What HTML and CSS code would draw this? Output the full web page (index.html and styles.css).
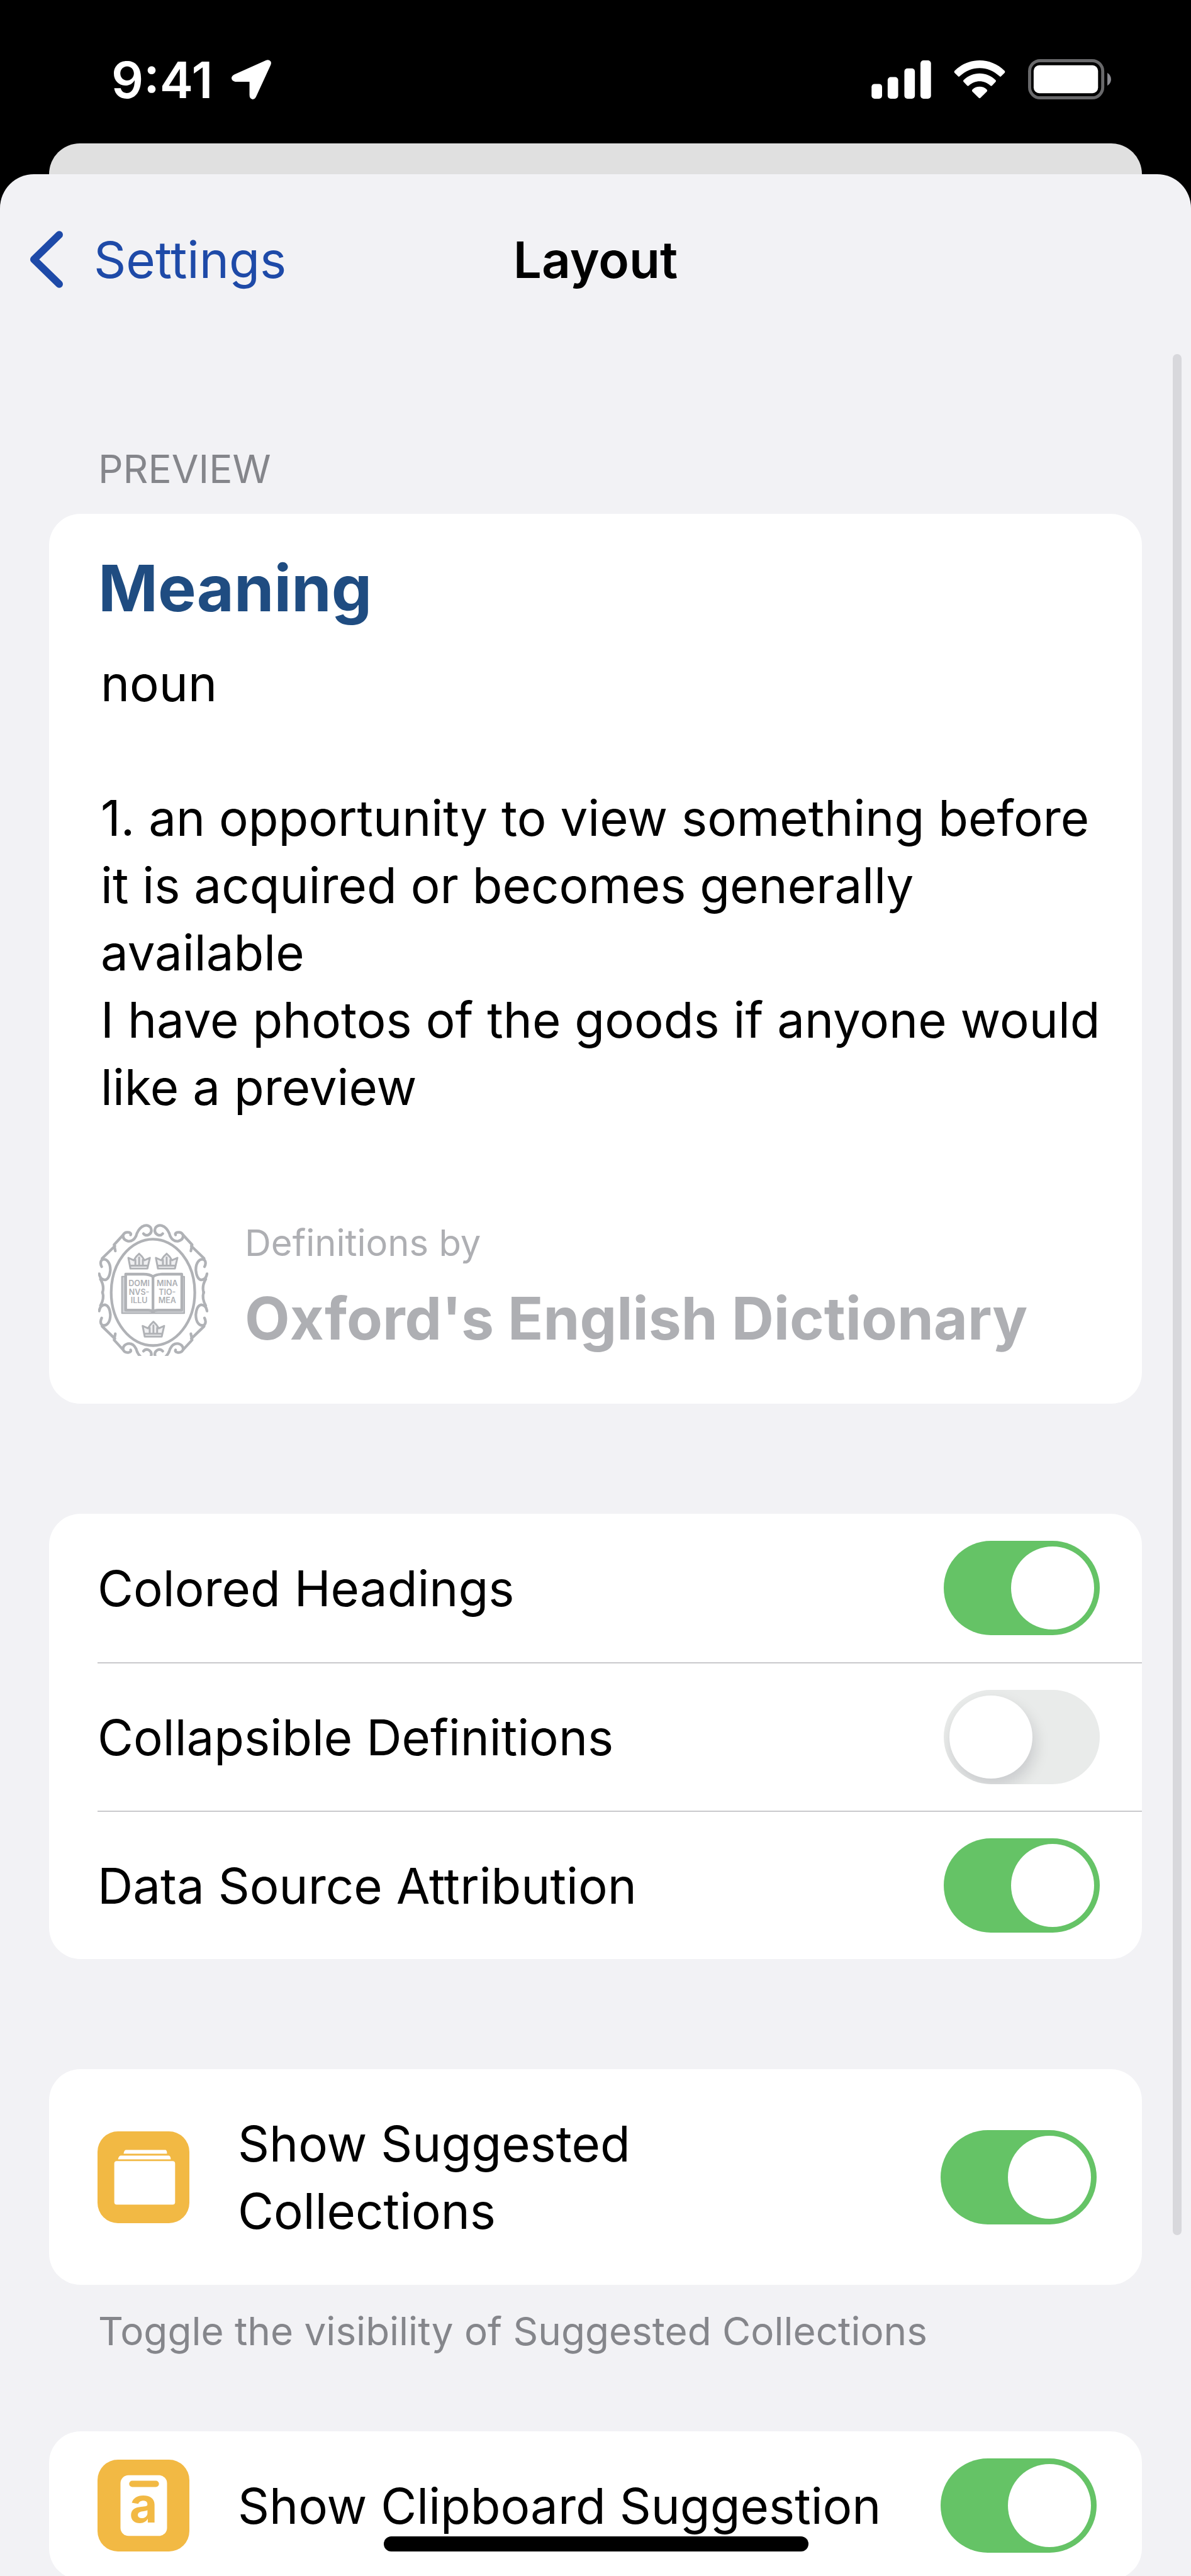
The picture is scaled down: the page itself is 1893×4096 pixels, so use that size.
FILE: index.html
```html
<!doctype html>
<html lang="en">
<head>
	<meta charset="UTF-8">
	<title>Layout</title>
	<link rel="stylesheet" href="styles.css">
</head>
<body>

<div class="screen">

	<!-- status bar -->
	<div class="status">
		<span class="time">9:41</span>
		<svg class="arrow" viewBox="0 0 64 64"><path d="M56 .700Q61-1 63.500 3Q64.500 6 63 9L40 59Q38 64 34 64Q29 63 29 57V35.500H6Q0 34 0 29.500Q0 26 5 23.500Z"/></svg>
		<div class="status-icons">
			<svg class="signal" viewBox="0 0 96 62">
				<rect x="0" y="38" width="17" height="24" rx="5"/>
				<rect x="26" y="27" width="17" height="35" rx="5"/>
				<rect x="53" y="13" width="17" height="49" rx="5"/>
				<rect x="79" y="0" width="17" height="62" rx="5"/>
			</svg>
			<svg class="wifi" viewBox="0 0 83 62">
				<path d="M1 17C24-5.500 59-5.500 82 17Q83 18.500 82 20L76 26Q75 27 73.500 25.500C55 8 28 8 9.500 25.500Q8 27 7 26L1 20Q0 18.500 1 17Z"/>
				<path d="M15.500 32C30 17.500 53 17.500 67.500 32Q68.500 33.500 67.500 34.500L61.500 41Q60.500 42 59 41C49 31.500 34 31.500 24 41Q22.500 42 21.500 41L15.500 34.500Q14.500 33.500 15.500 32Z"/>
				<path d="M30 47C36 41 47 41 53 47Q54.500 48.500 53.500 50L43 60.500Q41.500 62 40 60.500L29.500 50Q28.500 48.500 30 47Z"/>
			</svg>
			<svg class="battery" viewBox="0 0 134 65">
				<rect x="2.500" y="2.500" width="118" height="60" rx="17" fill="none" stroke="#69696b" stroke-width="5"/>
				<rect x="9" y="10" width="104" height="45" rx="9"/>
				<path d="M128 22Q134 26 134 32.500Q134 39 128 43Z" fill="#8a8a90"/>
			</svg>
		</div>
	</div>

	<div class="sheet-behind"></div>

	<div class="sheet">
		<div class="nav">
			<a class="back" href="#">
				<svg class="chevron" viewBox="0 0 56 94"><path d="M49 7L8 47L49 87" fill="none" stroke="#1e4aa8" stroke-width="12" stroke-linecap="round" stroke-linejoin="round"/></svg>
				Settings
			</a>
			<h1>Layout</h1>
		</div>

		<h2 class="section-title">PREVIEW</h2>
		<div class="card preview">
			<h3>Meaning</h3>
			<div class="definition">
				<p>noun</p>
				<p class="sense">1. an opportunity to view something before it is acquired or becomes generally available</p>
				<p>I have photos of the goods if anyone would like a preview</p>
			</div>
			<div class="source">
				<svg class="crest" viewBox="51 99 532 638">
					<defs>
						<g id="scroll">
							<path d="M270 146q10 12 24 6q22-12 10-36q-16-18-40-4q-22 16-30 46q-14 28-40 24q-26-8-22-30q8-16 28-12q12 4 8 12"/>
							<path d="M172 152L128 200L134 230M132 206L70 266"/>
							<path d="M68 306q-10-20 0-32q16-10 30 6q12 14 12 42q-4 44-26 48q-24-2-28-30"/>
							<path d="M62 366Q82 400 72 432"/>
						</g>
						<g id="crown">
							<path d="M14 76H96L108 24L82 36L70 18L56 4L42 18L30 36L4 24Z" fill="#efeff1"/>
							<path d="M38 58V34M56 58V22M74 58V34M16 62H94"/>
						</g>
					</defs>
					<g fill="none" stroke="#b0b2b6" stroke-width="13" stroke-linecap="round" stroke-linejoin="round">
						<use href="#scroll"/>
						<use href="#scroll" transform="matrix(-1 0 0 1 633 0)"/>
						<use href="#scroll" transform="matrix(1 0 0 -1 0 860)"/>
						<use href="#scroll" transform="matrix(-1 0 0 -1 633 860)"/>
						<ellipse cx="316" cy="430" rx="202" ry="257"/>
						<g stroke-width="9">
							<use href="#crown" x="193" y="239"/>
							<use href="#crown" x="326" y="239"/>
							<use href="#crown" x="262" y="568"/>
						</g>
						<path d="M166 354H182V516H300L316 526L332 516H455V354H467V531H166Z" fill="#d0d2d6" stroke-width="7"/>
						<path d="M184 342H270Q300 342 316 354Q332 342 362 342H455V516H340Q324 516 316 524Q308 516 292 516H184Z" fill="#fff"/>
						<path d="M316 354V520"/>
					</g>
					<g class="crest-text" text-anchor="middle">
						<text x="249" y="401">DOMI</text><text x="249" y="441">NVS-</text><text x="249" y="481">ILLU</text>
						<text x="385" y="401">MINA</text><text x="385" y="441">TIO-</text><text x="385" y="481">MEA</text>
					</g>
				</svg>
				<div>
					<p class="source-by">Definitions by</p>
					<p class="source-name">Oxford's English Dictionary</p>
				</div>
			</div>
		</div>

		<div class="card">
			<div class="row">
				<label for="headings">Colored Headings</label>
				<input class="switch" type="checkbox" id="headings" checked>
			</div>
			<div class="row">
				<label for="collapsible">Collapsible Definitions</label>
				<input class="switch" type="checkbox" id="collapsible">
			</div>
			<div class="row">
				<label for="attribution">Data Source Attribution</label>
				<input class="switch" type="checkbox" id="attribution" checked>
			</div>
		</div>

		<div class="card">
			<div class="row icon-row tall">
				<svg class="icon" viewBox="0 0 148 148">
					<rect width="148" height="148" rx="33" fill="#f2b944"/>
					<path d="M46 30H109Q112 30 112 36H42Q43 30 46 30ZM37 39H115Q118 40 118 45H33Q34 40 37 39Z" fill="#fff"/>
					<rect x="27" y="48" width="98" height="70" rx="4" fill="#fff"/>
				</svg>
				<label for="collections">Show Suggested Collections</label>
				<input class="switch" type="checkbox" id="collections" checked>
			</div>
		</div>
		<p class="note">Toggle the visibility of Suggested Collections</p>

		<div class="card last">
			<div class="row icon-row">
				<svg class="icon" viewBox="0 0 148 148">
					<rect width="148" height="148" rx="33" fill="#f2b944"/>
					<rect x="37" y="25" width="75" height="98" rx="13" fill="#fff"/>
					<rect x="51" y="34" width="48" height="10" rx="5" fill="#f2b944"/>
					<text class="icon-letter" x="74" y="101" text-anchor="middle">a</text>
				</svg>
				<label for="clipboard">Show Clipboard Suggestion</label>
				<input class="switch" type="checkbox" id="clipboard" checked>
			</div>
		</div>
	</div>

	<div class="scrollbar"></div>
	<div class="home-bar"></div>
</div>

</body>
</html>
```

FILE: styles.css
```css
*{
	margin:0;
	padding:0;
	box-sizing:border-box;
}

body{
	background:#000;
	color:#000;
	font-family:Inter,"Liberation Sans",sans-serif;
	font-size:78px;
	line-height:107px;
}

.screen{
	position:relative;
	display:flex;
	flex-direction:column;
	height:100vh;
	overflow:hidden;
}

/* status bar */
.status{
	display:flex;
	align-items:center;
	flex:none;
	height:228px;
	padding:24px 127px 0 177px;
	color:#fff;
}
.status svg{
	fill:#fff;
}
.time{
	font-size:80px;
	font-weight:600;
}
.arrow{
	width:63px;
	height:63px;
	margin-left:30px;
}
.status-icons{
	display:flex;
	align-items:center;
	gap:36px;
	margin-left:auto;
}
.signal{
	width:95px;
	height:61px;
}
.wifi{
	width:82px;
	height:61px;
}
.battery{
	width:132px;
	height:64px;
}

/* sheets */
.sheet-behind{
	flex:none;
	height:49px;
	margin:0 78px;
	border-radius:50px 50px 0 0;
	background:#e0e0e0;
}
.sheet{
	flex:1;
	min-height:0;
	padding:0 78px;
	border-radius:54px 54px 0 0;
	background:#f2f2f5;
}

.nav{
	display:grid;
	grid-template-columns:1fr auto 1fr;
	align-items:center;
	height:270px;
	margin:0 -32px;
	font-size:80px;
}
.back{
	display:flex;
	align-items:center;
	gap:48px;
	color:#1e4aa8;
	text-decoration:none;
}
.chevron{
	width:55px;
	height:93px;
}
h1{
	font-size:80px;
	font-weight:600;
}

.section-title,
.note{
	padding-left:78px;
	color:#85868b;
	font-size:62px;
	font-weight:400;
	line-height:76px;
}
.section-title{
	margin:161px 0 33px;
}
.note{
	margin-top:36px;
}

.card{
	border-radius:50px;
	background:#fff;
}
.card + .card{
	margin-top:175px;
}
.last{
	margin-top:121px;
}

/* preview */
.preview{
	padding:54px 60px 76px 78px;
}
h3{
	color:#1f4c81;
	font-size:102px;
	font-weight:700;
	line-height:128px;
}
.definition{
	margin-top:34px;
	padding-left:4px;
}
.sense{
	margin-top:107px;
}
.source{
	display:flex;
	align-items:flex-end;
	gap:58px;
	margin-top:154px;
	color:#aeafb3;
}
.crest{
	width:175px;
	height:210px;
}
.crest-text{
	fill:#aeb0b4;
	font-size:38px;
	font-weight:600;
}
.source-by{
	font-size:58px;
	line-height:80px;
}
.source-name{
	margin-top:20px;
	font-size:93px;
	font-weight:700;
	line-height:120px;
}

/* setting rows */
.row{
	display:flex;
	align-items:center;
	height:236px;
	margin-left:77px;
	padding-right:67px;
}
.row + .row{
	border-top:2px solid #c9c9cc;
}
.row label{
	flex:1;
}
.icon-row{
	gap:77px;
	padding-right:72px;
}
.tall{
	height:343px;
}
.icon{
	flex:none;
	width:146px;
	height:146px;
}
.icon-letter{
	fill:#f2b944;
	font-size:78px;
	font-weight:700;
}

.switch{
	flex:none;
	appearance:none;
	width:248px;
	height:150px;
	padding:9px;
	border-radius:75px;
	background:#e9ebea;
	overflow:hidden;
}
.switch::before{
	content:"";
	display:block;
	width:132px;
	height:132px;
	border-radius:50%;
	background:#fff;
	box-shadow:4px 12px 24px rgba(0,0,30,0.14);
}
.switch:checked{
	background:#65c366;
}
.switch:checked::before{
	margin-left:auto;
	box-shadow:none;
}

.scrollbar{
	position:absolute;
	top:563px;
	right:15px;
	bottom:542px;
	width:14px;
	border-radius:7px;
	background:#d8d8dc;
}
.home-bar{
	position:absolute;
	bottom:39px;
	left:50%;
	width:675px;
	height:24px;
	margin-left:-337px;
	border-radius:12px;
	background:#000;
}
```
